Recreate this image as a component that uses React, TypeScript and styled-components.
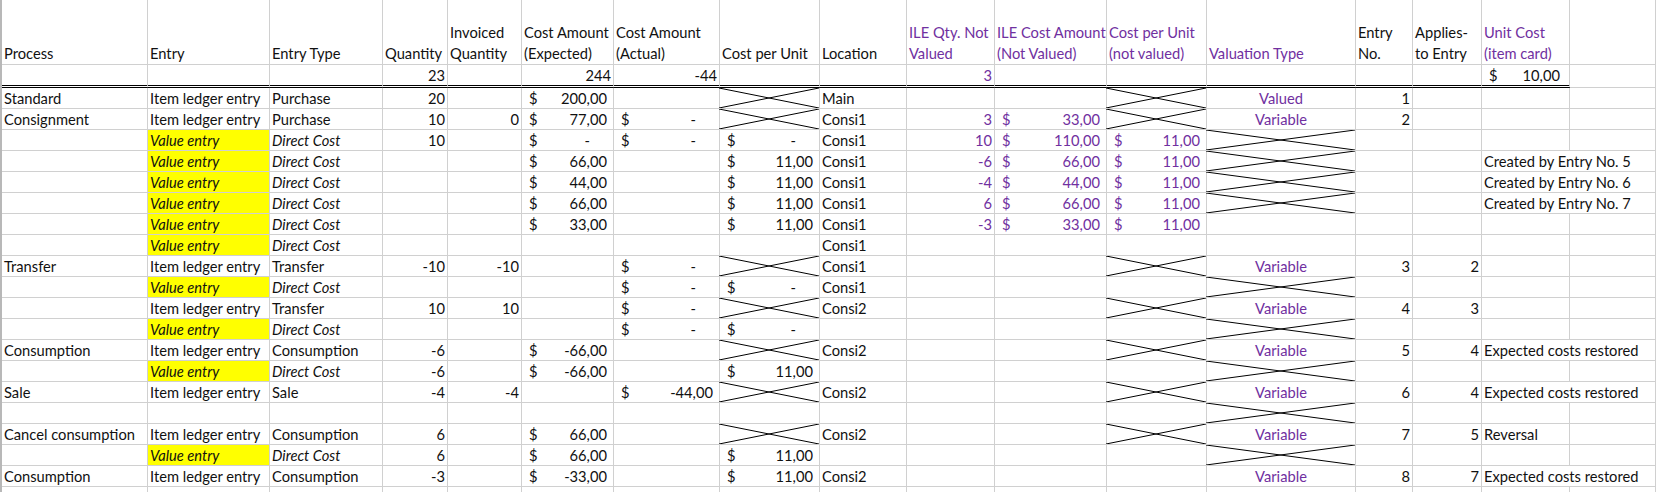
import React from "react";
import styled, { createGlobalStyle, css } from "styled-components";

const GlobalStyle = createGlobalStyle`
  html, body {
    margin: 0;
    padding: 0;
    background: #fff;
    overflow: hidden;
  }
`;

const COLUMNS =
  "146px 122px 113px 65px 74px 92px 106px 100px 87px 88px 112px 100px 149px 57px 69px 88px 1fr";

const Sheet = styled.div`
  width: 1656px;
  height: 492px;
  overflow: hidden;
  box-sizing: border-box;
  border-left: 2px solid #b8b8b8;
  font-family: Lato, "Open Sans", sans-serif;
  font-size: 14.7px;
  color: #111;
`;

const Row = styled.div<{ $h?: number; $double?: boolean }>`
  display: grid;
  grid-template-columns: ${COLUMNS};
  height: ${(p) => p.$h ?? 21}px;
  box-sizing: border-box;
  border-bottom: 1px solid #d0d0d0;
  ${(p) =>
    p.$double &&
    css`
      border-bottom: none;
      & > * {
        border-bottom: 3px double #000;
      }
      & > :last-child {
        border-bottom: 1px solid #d0d0d0;
      }
    `}
`;

const Cell = styled.div<{
  $align?: "left" | "right" | "center";
  $purple?: boolean;
  $yellow?: boolean;
  $italic?: boolean;
  $span?: number;
}>`
  position: relative;
  display: flex;
  align-items: flex-end;
  justify-content: ${(p) =>
    p.$align === "right" ? "flex-end" : p.$align === "center" ? "center" : "flex-start"};
  grid-column: span ${(p) => p.$span ?? 1};
  box-sizing: border-box;
  min-width: 0;
  padding: 0 2px;
  border-right: 1px solid #d0d0d0;
  line-height: 19px;
  white-space: nowrap;
  color: ${(p) => (p.$purple ? "#7030a0" : "inherit")};
  background: ${(p) => (p.$yellow ? "#ffff00" : "transparent")};
  font-style: ${(p) => (p.$italic ? "italic" : "normal")};
`;

const HeaderCell = styled(Cell)`
  white-space: pre;
  line-height: 21px;
`;

const Money = styled(Cell)<{ $right: number }>`
  justify-content: space-between;
  padding: 0 ${(p) => p.$right}px 0 7px;
`;

const Cross = styled.svg`
  position: absolute;
  left: -1px;
  top: 0;
  width: calc(100% + 1px);
  height: 100%;
  pointer-events: none;
`;

const CrossLines = () => (
  <Cross viewBox="0 0 100 100" preserveAspectRatio="none">
    <line x1="0" y1="0" x2="100" y2="100" stroke="#000" strokeWidth="1" vectorEffect="non-scaling-stroke" />
    <line x1="0" y1="100" x2="100" y2="0" stroke="#000" strokeWidth="1" vectorEffect="non-scaling-stroke" />
  </Cross>
);

// what a spreadsheet cell can hold
type CellValue =
  | null
  | string
  | { t: string; r?: boolean; c?: boolean; p?: boolean }
  | { m: string; p?: boolean; pad?: number }
  | { x: true }
  | { note: string };

const n = (t: string | number): CellValue => ({ t: String(t), r: true });
const pn = (t: string | number): CellValue => ({ t: String(t), r: true, p: true });
const m = (v: string): CellValue => ({ m: v });
const pm = (v: string): CellValue => ({ m: v, p: true });
const X: CellValue = { x: true };
const V = (t: string): CellValue => ({ t, c: true, p: true });

const ILE = "Item ledger entry";
const VE = "Value entry";
const DC = "Direct Cost";
const EXPECTED = "Expected costs restored";

const headers: { label: string; purple?: boolean }[] = [
  { label: "Process" },
  { label: "Entry" },
  { label: "Entry Type" },
  { label: "Quantity" },
  { label: "Invoiced\nQuantity" },
  { label: "Cost Amount\n(Expected)" },
  { label: "Cost Amount\n(Actual)" },
  { label: "Cost per Unit" },
  { label: "Location" },
  { label: "ILE Qty. Not\nValued", purple: true },
  { label: "ILE Cost Amount\n(Not Valued)", purple: true },
  { label: "Cost per Unit\n(not valued)", purple: true },
  { label: "Valuation Type", purple: true },
  { label: "Entry\nNo." },
  { label: "Applies-\nto Entry" },
  { label: "Unit Cost\n(item card)", purple: true },
  { label: "" },
];

const totals: CellValue[] = [
  null, null, null, n(23), null, n(244), n(-44), null, null, pn(3), null, null, null, null, null, { m: "10,00", pad: 9 }, null,
];

const rows: CellValue[][] = [
  ["Standard", ILE, "Purchase", n(20), null, m("200,00"), null, X, "Main", null, null, X, V("Valued"), n(1), null, null, null],
  ["Consignment", ILE, "Purchase", n(10), n(0), m("77,00"), m("-"), X, "Consi1", pn(3), pm("33,00"), X, V("Variable"), n(2), null, null, null],
  [null, VE, DC, n(10), null, m("-"), m("-"), m("-"), "Consi1", pn(10), pm("110,00"), pm("11,00"), X, null, null, null, null],
  [null, VE, DC, null, null, m("66,00"), null, m("11,00"), "Consi1", pn(-6), pm("66,00"), pm("11,00"), X, null, null, { note: "Created by Entry No. 5" }],
  [null, VE, DC, null, null, m("44,00"), null, m("11,00"), "Consi1", pn(-4), pm("44,00"), pm("11,00"), X, null, null, { note: "Created by Entry No. 6" }],
  [null, VE, DC, null, null, m("66,00"), null, m("11,00"), "Consi1", pn(6), pm("66,00"), pm("11,00"), X, null, null, { note: "Created by Entry No. 7" }],
  [null, VE, DC, null, null, m("33,00"), null, m("11,00"), "Consi1", pn(-3), pm("33,00"), pm("11,00"), null, null, null, null, null],
  [null, VE, DC, null, null, null, null, null, "Consi1", null, null, null, null, null, null, null, null],
  ["Transfer", ILE, "Transfer", n(-10), n(-10), null, m("-"), X, "Consi1", null, null, X, V("Variable"), n(3), n(2), null, null],
  [null, VE, DC, null, null, null, m("-"), m("-"), "Consi1", null, null, null, X, null, null, null, null],
  [null, ILE, "Transfer", n(10), n(10), null, m("-"), X, "Consi2", null, null, X, V("Variable"), n(4), n(3), null, null],
  [null, VE, DC, null, null, null, m("-"), m("-"), null, null, null, null, X, null, null, null, null],
  ["Consumption", ILE, "Consumption", n(-6), null, m("-66,00"), null, X, "Consi2", null, null, X, V("Variable"), n(5), n(4), { note: EXPECTED }],
  [null, VE, DC, n(-6), null, m("-66,00"), null, m("11,00"), null, null, null, null, X, null, null, null, null],
  ["Sale", ILE, "Sale", n(-4), n(-4), null, m("-44,00"), X, "Consi2", null, null, X, V("Variable"), n(6), n(4), { note: EXPECTED }],
  [null, null, null, null, null, null, null, null, null, null, null, null, X, null, null, null, null],
  ["Cancel consumption", ILE, "Consumption", n(6), null, m("66,00"), null, X, "Consi2", null, null, X, V("Variable"), n(7), n(5), "Reversal", null],
  [null, VE, DC, n(6), null, m("66,00"), null, m("11,00"), null, null, null, null, X, null, null, null, null],
  ["Consumption", ILE, "Consumption", n(-3), null, m("-33,00"), null, m("11,00"), "Consi2", null, null, null, V("Variable"), n(8), n(7), { note: EXPECTED }],
  [null, null, null, null, null, null, null, null, null, null, null, null, null, null, null, null, null],
];

const renderCell = (v: CellValue, i: number) => {
  if (v === null) return <Cell key={i} />;
  if (typeof v === "string") {
    if (v === VE) return <Cell key={i} $yellow $italic>{v}</Cell>;
    if (v === DC) return <Cell key={i} $italic>{v}</Cell>;
    return <Cell key={i}>{v}</Cell>;
  }
  if ("x" in v) return <Cell key={i}><CrossLines /></Cell>;
  if ("note" in v) return <Cell key={i} $span={2}>{v.note}</Cell>;
  if ("m" in v) {
    // a zero amount shows as a dash, set in from the right edge
    const right = v.m === "-" ? 23 : v.pad ?? 6;
    return (
      <Money key={i} $purple={v.p} $right={right}>
        <span>$</span>
        <span>{v.m}</span>
      </Money>
    );
  }
  return (
    <Cell key={i} $purple={v.p} $align={v.r ? "right" : v.c ? "center" : "left"}>
      {v.t}
    </Cell>
  );
};

export default function App() {
  return (
    <>
      <GlobalStyle />
      <Sheet>
        <Row $h={65}>
          {headers.map((h, i) => (
            <HeaderCell key={i} $purple={h.purple}>
              {h.label}
            </HeaderCell>
          ))}
        </Row>
        <Row $h={23} $double>
          {totals.map(renderCell)}
        </Row>
        {rows.map((r, i) => (
          <Row key={i}>{r.map(renderCell)}</Row>
        ))}
      </Sheet>
    </>
  );
}
